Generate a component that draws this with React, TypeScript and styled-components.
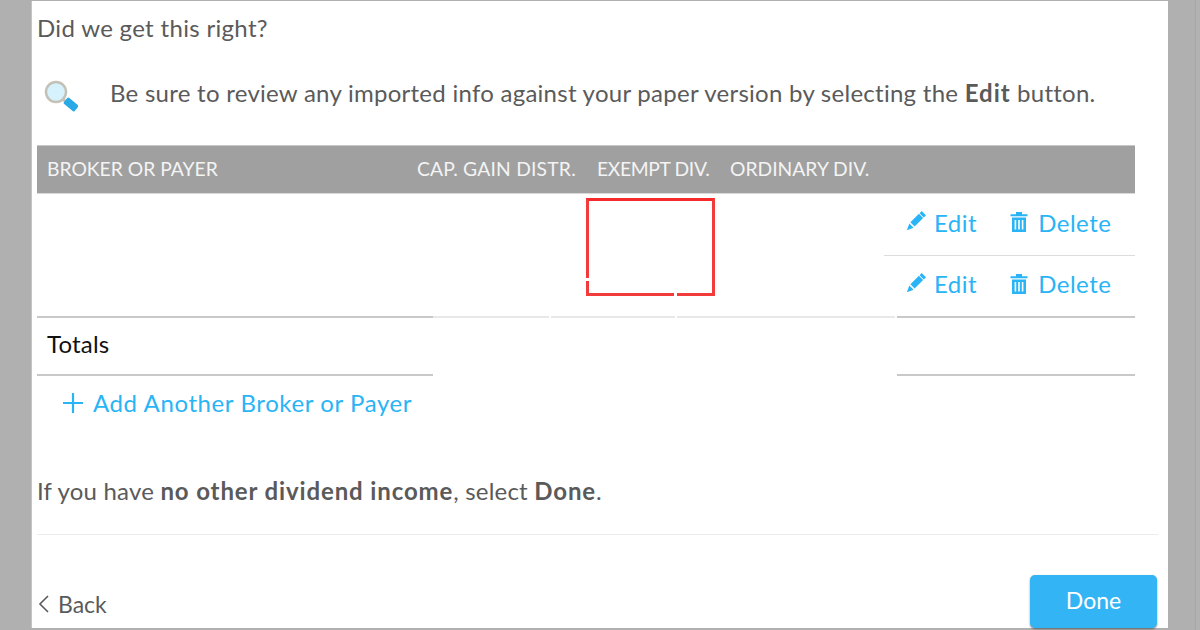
import React from 'react';
import styled, { createGlobalStyle } from 'styled-components';

const GlobalStyle = createGlobalStyle`
  html, body {
    margin: 0;
    padding: 0;
    width: 1200px;
    height: 630px;
    overflow: hidden;
    background: #b0b0b0;
    font-family: "Lato", "Open Sans", sans-serif;
  }
`;

const Page = styled.div`
  width: 1200px;
  height: 630px;
  display: flex;
  flex-direction: column;
  padding: 1px 32px 2px 32px;
  box-sizing: border-box;
  background: linear-gradient(to right, #b0b0b0 1195px, #a6a6a6 1195px, #a6a6a6 1196px, #b2b2b2 1196px);
`;

const Modal = styled.main`
  flex: 1;
  background: #fff;
  padding: 0 10px 0 5px;
  display: flex;
  flex-direction: column;
  border-left: 1px solid #c4c4c4;
  margin-left: -1px;
`;

const Title = styled.h1`
  margin: 12px 0 0;
  font-size: 24px;
  line-height: 29px;
  font-weight: 400;
  letter-spacing: 0.32px;
  color: #5a5a5a;
`;

const Notice = styled.div`
  margin-top: 30px;
  height: 48px;
  display: flex;
  align-items: center;
  gap: 32px;
  padding-left: 5px;
  font-size: 24px;
  letter-spacing: 0.265px;
  color: #5a5a5a;
  b { font-weight: 700; letter-spacing: 1px; }
`;

const NoticeText = styled.p`
  margin: 0;
  position: relative;
  top: -4px;
  white-space: nowrap;
`;

const Table = styled.section`
  width: 1098px;
  margin-top: 25px;
  position: relative;
`;

const HeaderRow = styled.div`
  height: 47px;
  box-sizing: content-box;
  background: #a0a0a0;
  border-top: 1px solid #c8c8c8;
  border-bottom: 1px solid #d8d8d8;
  display: flex;
  align-items: center;
  padding-left: 10px;
  color: #f4f4f4;
  font-size: 19.3px;
`;

const HeaderLabel = styled.span<{ $width: number; $tracking?: number }>`
  width: ${(p) => p.$width}px;
  white-space: nowrap;
  position: relative;
  top: -1px;
  letter-spacing: ${(p) => p.$tracking ?? 0}px;
`;

const Rows = styled.div`
  height: 122px;
  display: flex;
  justify-content: flex-end;
`;

const ActionColumn = styled.div`
  width: 251px;
  display: flex;
  flex-direction: column;
`;

const ActionRow = styled.div`
  height: 61px;
  box-sizing: border-box;
  display: flex;
  align-items: center;
  padding: 0 0 5px 19px;
  gap: 32px;
  & + & { border-top: 1px solid #dcdcdc; }
`;

const ActionLink = styled.a`
  display: flex;
  align-items: center;
  gap: 7px;
  color: #29b4f6;
  font-size: 24px;
  letter-spacing: 0.5px;
`;

const RuleRow = styled.div`
  display: flex;
  height: 2px;
`;

const Rule = styled.div<{ $width: number; $strong?: boolean; $blank?: boolean }>`
  width: ${(p) => p.$width}px;
  background: ${(p) => (p.$blank ? 'transparent' : p.$strong ? '#c8c8c8' : '#e8e8e8')};
`;

const TotalsRow = styled.div`
  height: 56px;
  box-sizing: border-box;
  display: flex;
  align-items: center;
  padding: 0 0 6px 10px;
  font-size: 24px;
  letter-spacing: 0.2px;
  color: #111;
`;

const AddLink = styled.a`
  display: flex;
  align-items: center;
  gap: 9px;
  margin: 12px 0 0 25px;
  color: #29b4f6;
  font-size: 24px;
  letter-spacing: 0.6px;
`;

const Callout = styled.div`
  position: absolute;
  left: 549px;
  top: 53px;
  width: 129px;
  height: 98px;
  box-sizing: border-box;
  border: 3px solid #f23c3c;
  border-top-color: #f52a2a;
`;

const CalloutGap = styled.span<{ $side: 'left' | 'bottom' }>`
  position: absolute;
  background: #fff;
  ${(p) =>
    p.$side === 'left'
      ? 'left: -3px; bottom: 12px; width: 3px; height: 3px;'
      : 'left: 85px; bottom: -3px; width: 3px; height: 3px;'}
`;

const Summary = styled.p`
  margin: 59px 0 0;
  font-size: 24px;
  letter-spacing: 0.2px;
  color: #5a5a5a;
  b { font-weight: 700; letter-spacing: 0.875px; }
`;

const Divider = styled.hr`
  margin: 29px 0 0;
  border: 0;
  height: 1px;
  background: #ececec;
`;

const Footer = styled.footer`
  flex: 1;
  display: flex;
  justify-content: space-between;
  align-items: flex-end;
  padding-right: 1px;
`;

const BackLink = styled.a`
  display: flex;
  align-items: center;
  gap: 8px;
  margin-bottom: 10px;
  font-size: 23px;
  color: #5a5a5a;
`;

const DoneButton = styled.button`
  width: 127px;
  height: 53px;
  padding: 0 0 4px;
  border: 0;
  border-radius: 5px;
  background: #33b5f5;
  color: #fff;
  font: inherit;
  font-size: 23px;
  box-shadow: 0 1px 2px rgba(0, 0, 0, 0.45);
`;

const Magnifier = () => (
  <svg width="36" height="36" viewBox="0 0 36 36">
    <circle cx="14" cy="14" r="10" fill="#d6f2fd" stroke="#c4c2b6" strokeWidth="2.5" />
    <path d="M21.5 21.5 L24 24" stroke="#c4c2b6" strokeWidth="3" />
    <rect x="22" y="22.5" width="14" height="8" rx="1.5" fill="#29a9e6" transform="rotate(40 29 26.5)" />
  </svg>
);

const PencilIcon = () => (
  <svg width="24" height="24" viewBox="-2 -2 24 24" fill="#29b4f6">
    <g transform="rotate(45 10 10)">
      <path d="M7 -2.5h6v3H7z" />
      <path d="M7 1.5h6v12H7z" />
      <path d="M7 15h6l-3 6.5z" />
    </g>
  </svg>
);

const TrashIcon = () => (
  <svg width="22" height="20" viewBox="-1 0 22 20" fill="#29b4f6">
    <path d="M6 0h6v2.2h5.5v2H.5v-2H6z" />
    <path d="M2 5.5h14V20H2zM4.6 8v9.5h1.6V8zm3.6 0v9.5h1.6V8zm3.6 0v9.5h1.6V8z" fillRule="evenodd" />
  </svg>
);

const PlusIcon = () => (
  <svg width="22" height="22" viewBox="0 0 22 22" stroke="#29b4f6" strokeWidth="2.2">
    <path d="M11 1v20M1 11h20" />
  </svg>
);

const ChevronIcon = () => (
  <svg width="13" height="18" viewBox="0 0 13 18" fill="none" stroke="#5a5a5a" strokeWidth="1.6">
    <path d="M11 1 3 9l8 8" />
  </svg>
);

const Actions = () => (
  <>
    <ActionLink>
      <PencilIcon />
      Edit
    </ActionLink>
    <ActionLink>
      <TrashIcon />
      Delete
    </ActionLink>
  </>
);

export default function App() {
  return (
    <>
      <GlobalStyle />
      <Page>
        <Modal>
          <Title>Did we get this right?</Title>
          <Notice>
            <Magnifier />
            <NoticeText>
              Be sure to review any imported info against your paper version by selecting the <b>Edit</b> button.
            </NoticeText>
          </Notice>
          <Table>
            <HeaderRow>
              <HeaderLabel $width={370}>BROKER OR PAYER</HeaderLabel>
              <HeaderLabel $width={180} $tracking={0.2}>CAP. GAIN DISTR.</HeaderLabel>
              <HeaderLabel $width={133} $tracking={-0.35}>EXEMPT DIV.</HeaderLabel>
              <HeaderLabel $width={150}>ORDINARY DIV.</HeaderLabel>
            </HeaderRow>
            <Rows>
              <ActionColumn>
                <ActionRow><Actions /></ActionRow>
                <ActionRow><Actions /></ActionRow>
              </ActionColumn>
            </Rows>
            <RuleRow>
              <Rule $width={396} $strong />
              <Rule $width={116} />
              <Rule $width={2} $blank />
              <Rule $width={124} />
              <Rule $width={2} $blank />
              <Rule $width={218} />
              <Rule $width={2} $blank />
              <Rule $width={238} $strong />
            </RuleRow>
            <TotalsRow>Totals</TotalsRow>
            <RuleRow>
              <Rule $width={396} $strong />
              <Rule $width={464} $blank />
              <Rule $width={238} $strong />
            </RuleRow>
            <Callout>
              <CalloutGap $side="left" />
              <CalloutGap $side="bottom" />
            </Callout>
          </Table>
          <AddLink>
            <PlusIcon />
            Add Another Broker or Payer
          </AddLink>
          <Summary>
            If you have <b>no other dividend income</b>, select <b>Done</b>.
          </Summary>
          <Divider />
          <Footer>
            <BackLink>
              <ChevronIcon />
              Back
            </BackLink>
            <DoneButton>Done</DoneButton>
          </Footer>
        </Modal>
      </Page>
    </>
  );
}
